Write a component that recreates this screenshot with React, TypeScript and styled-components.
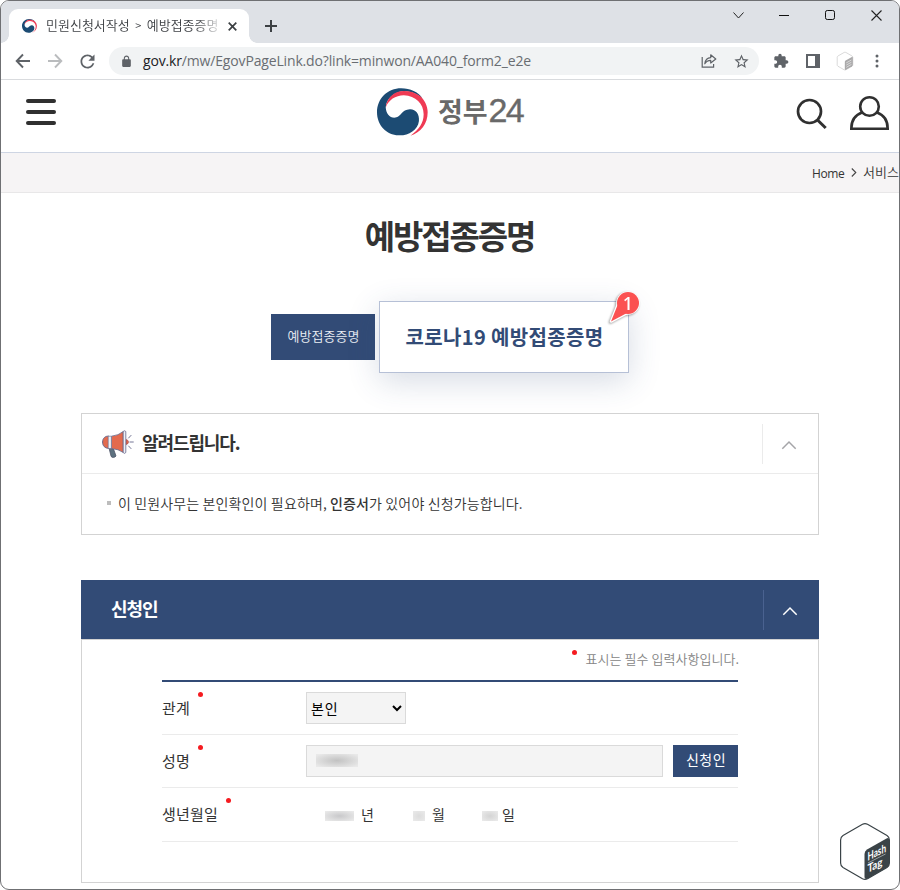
import React from "react";
import styled, { createGlobalStyle } from "styled-components";

const NAVY = "#324b76";

const Global = createGlobalStyle`
  * { box-sizing: border-box; }
  body { margin: 0; background: #fff; }
  body, select, button { font-family: "Noto Sans CJK KR", sans-serif; }
  svg { display: block; flex: none; overflow: visible; }
`;

const Window = styled.div`
  position: relative;
  width: 900px;
  height: 890px;
  border: 1px solid #6f7073;
  border-radius: 9px;
  overflow: hidden;
  background: #fff;
  color: #333;
`;

/* ---------- browser chrome ---------- */

const TabStrip = styled.div`
  display: flex;
  height: 42px;
  padding-left: 8px;
  background: #dee1e6;
`;

const Tab = styled.div`
  position: relative;
  display: flex;
  align-items: center;
  width: 240px;
  height: 34px;
  margin-top: 8px;
  padding-left: 13px;
  border-radius: 9px 9px 0 0;
  background: #fff;
  &::before, &::after {
    content: "";
    position: absolute;
    bottom: 0;
    width: 8px;
    height: 8px;
  }
  &::before { left: -8px; background: radial-gradient(circle at 0 0, transparent 7.5px, #fff 8px); }
  &::after { right: -8px; background: radial-gradient(circle at 100% 0, transparent 7.5px, #fff 8px); }
`;

const TabTitle = styled.div`
  width: 173px;
  margin: 0 9px 2px 9px;
  overflow: hidden;
  white-space: nowrap;
  font-size: 13px;
  font-weight: 350;
  line-height: 20px;
  color: #3c3f43;
  mask-image: linear-gradient(90deg, #000 150px, transparent 178px);
`;

const Gt = styled.span`
  display: inline-block;
  width: 17px;
  text-align: center;
  font-size: 11px;
`;

const NewTab = styled.div`
  display: flex;
  align-items: center;
  margin: 8px 0 0 16px;
`;

const Controls = styled.div`
  display: flex;
  height: 28px;
  margin-left: auto;
`;

const Control = styled.div<{ $w: number }>`
  display: flex;
  align-items: center;
  justify-content: center;
  width: ${(p) => p.$w}px;
`;

const Toolbar = styled.div`
  display: flex;
  align-items: center;
  height: 37px;
  padding-left: 6px;
  border-bottom: 1px solid #d9dbde;
`;

const Slot = styled.div<{ $w?: number }>`
  display: flex;
  justify-content: center;
  flex: none;
  width: ${(p) => p.$w ?? 32}px;
`;

const Omnibox = styled.div`
  display: flex;
  align-items: center;
  width: 650px;
  height: 28px;
  margin: 0 6px;
  padding-right: 2px;
  border-radius: 14px;
  background: #f1f3f4;
`;

const Url = styled.div`
  flex: 1;
  font: 14px/20px "Open Sans", "Noto Sans", sans-serif;
  letter-spacing: -0.16px;
  white-space: nowrap;
  color: #696d72;
`;

const Host = styled.span`
  color: #202124;
`;

/* ---------- page header ---------- */

const SiteHeader = styled.header`
  display: grid;
  grid-template-columns: 1fr auto 1fr;
  height: 73px;
  border-bottom: 1px solid #ced5e3;
`;

const Burger = styled.button`
  display: flex;
  flex-direction: column;
  justify-content: space-between;
  width: 30px;
  height: 26px;
  margin: 19px 0 0 25px;
  padding: 0;
  border: 0;
  background: none;
`;

const Bar = styled.span`
  height: 4px;
  border-radius: 2px;
  background: #303030;
`;

const Brand = styled.div`
  display: flex;
  padding-top: 8px;
`;

const BrandName = styled.div`
  display: flex;
  align-items: baseline;
  height: 48px;
  margin-left: 10px;
  color: #696969;
  font-size: 27px;
  font-weight: 700;
  line-height: 45px;
  letter-spacing: -0.1px;
`;

const BrandNumber = styled.span`
  margin-left: 1px;
  font-family: "Liberation Sans", sans-serif;
  font-size: 34px;
  font-weight: 400;
  letter-spacing: -1.6px;
  -webkit-text-stroke: 0.4px #696969;
`;

const HeaderTools = styled.div`
  display: flex;
  justify-content: flex-end;
  gap: 22px;
  padding: 16px 10px 0 0;
`;

const Crumbs = styled.nav`
  display: flex;
  align-items: center;
  height: 40px;
  padding-left: 811px;
  border-bottom: 1px solid #e8e7e8;
  background: #f6f4f5;
  white-space: nowrap;
  font-size: 13px;
  font-weight: 350;
  line-height: 20px;
`;

const HomeLabel = styled.span`
  width: 39px;
  padding-top: 2px;
  font-family: "Open Sans", sans-serif;
  font-size: 12px;
  font-weight: 400;
  letter-spacing: -0.4px;
`;

const CrumbLabel = styled.span`
  margin: 0 0 1px 6px;
`;

/* ---------- content ---------- */

const Title = styled.h1`
  height: 48px;
  margin: 18px 0 42px;
  padding-right: 1px;
  text-align: center;
  font-size: 33px;
  font-weight: 700;
  line-height: 48px;
  letter-spacing: -2.1px;
`;

const Choices = styled.div`
  display: flex;
  justify-content: center;
  align-items: center;
  gap: 4px;
  height: 72px;
`;

const Choice = styled.button`
  width: 104px;
  height: 46px;
  padding: 0 0 3px 1px;
  border: 0;
  background: ${NAVY};
  color: #eceff4;
  font-size: 13px;
  font-weight: 350;
`;

const MainChoice = styled.button`
  position: relative;
  width: 250px;
  height: 72px;
  padding: 0 0 2px 1px;
  border: 1px solid #b6c0d6;
  background: #fff;
  box-shadow: 0 8px 32px rgba(50, 75, 118, 0.2);
  color: ${NAVY};
  font-size: 20px;
  font-weight: 700;
  letter-spacing: 0.35px;
  white-space: nowrap;
`;

const Marker = styled.svg`
  position: absolute;
  left: 226px;
  top: -14px;
  filter: drop-shadow(-1px 1px 1px rgba(0, 0, 0, 0.4));
`;

const Notice = styled.section`
  width: 738px;
  height: 122px;
  margin: 40px 0 45px 80px;
  border: 1px solid #d3d3d3;
`;

const PanelHead = styled.div<{ $dark?: boolean }>`
  display: flex;
  align-items: center;
  height: ${(p) => (p.$dark ? 59 : 60)}px;
  padding-left: ${(p) => (p.$dark ? 30 : 20)}px;
  border-bottom: ${(p) => (p.$dark ? "0" : "1px solid #ebebeb")};
  background: ${(p) => (p.$dark ? NAVY : "#fff")};
  color: ${(p) => (p.$dark ? "#fff" : "#333")};
`;

const Heading = styled.h2<{ $gap?: number }>`
  flex: 1;
  margin: 0 0 3px ${(p) => p.$gap ?? 0}px;
  font-size: 18px;
  font-weight: 700;
  line-height: 28px;
  letter-spacing: -1.1px;
`;

const Toggle = styled.div<{ $dark?: boolean }>`
  display: flex;
  align-items: center;
  width: 56px;
  height: 40px;
  padding: 2px 0 0 18px;
  border-left: 1px solid ${(p) => (p.$dark ? "#4a6290" : "#ebebeb")};
`;

const NoticeLine = styled.div`
  display: flex;
  align-items: center;
  height: 60px;
  padding-left: 25px;
  font-size: 14px;
  font-weight: 350;
  letter-spacing: 0.13px;
  white-space: pre;
`;

const NoticeText = styled.span`
  margin-bottom: 3px;
`;

const Bullet = styled.span`
  width: 4px;
  height: 4px;
  margin: 0 7px 2px 0;
  background: #bdbdbd;
`;

const Strong = styled.b`
  font-weight: 500;
`;

const Applicant = styled.section`
  width: 738px;
  margin-left: 80px;
`;

const FormBody = styled.div`
  height: 244px;
  padding: 0 80px;
  border: 1px solid #d3d3d3;
`;

const RequiredNote = styled.div`
  display: flex;
  justify-content: flex-end;
  height: 40px;
  margin-right: -1px;
  font-size: 13px;
  font-weight: 350;
  line-height: 38px;
  letter-spacing: 0.04px;
  color: #858585;
  white-space: nowrap;
`;

const Dot = styled.i<{ $top: number; $gap: number }>`
  width: 5px;
  height: 5px;
  margin: ${(p) => p.$top}px ${(p) => p.$gap}px 0 0;
  border-radius: 50%;
  background: #f51b20;
`;

const Fields = styled.div`
  border-top: 2px solid ${NAVY};
`;

const Field = styled.div<{ $h: number }>`
  display: flex;
  align-items: center;
  height: ${(p) => p.$h}px;
  border-bottom: 1px solid #ebebeb;
`;

const Label = styled.div`
  display: flex;
  align-self: stretch;
  width: 144px;
  font-size: 15px;
  line-height: 51px;
  letter-spacing: 0.2px;
  gap: 8px;
`;

const Select = styled.select`
  width: 100px;
  height: 32px;
  padding: 0 0 1px;
  border: 1px solid #dadada;
  border-radius: 0;
  background: #f4f4f4;
  color: #000;
  font-size: 14px;
  letter-spacing: 0.8px;
`;

const NameBox = styled.div`
  width: 357px;
  height: 32px;
  margin-right: 10px;
  padding: 8px 9px;
  border: 1px solid #dadada;
  background: #f4f4f4;
`;

const Mask = styled.div<{ $w: number; $h: number; $tone: string }>`
  width: ${(p) => p.$w}px;
  height: ${(p) => p.$h}px;
  margin-top: 3px;
  background: radial-gradient(ellipse at center, ${(p) => p.$tone}, #e9e9e9 90%);
`;

const NameMask = styled(Mask)`
  margin-top: 0;
`;

const Submit = styled.button`
  width: 65px;
  height: 32px;
  padding: 0 0 4px 1px;
  border: 0;
  background: ${NAVY};
  color: #fff;
  font-size: 14px;
  letter-spacing: 0.4px;
`;

const DatePart = styled.div<{ $w: number; $gap?: number }>`
  display: flex;
  align-items: center;
  justify-content: flex-end;
  gap: ${(p) => p.$gap ?? 7}px;
  width: ${(p) => p.$w}px;
  font-size: 14px;
`;

const Unit = styled.span`
  margin-bottom: 2px;
`;

const Watermark = styled.div`
  position: absolute;
  left: 839px;
  top: 822px;
`;

/* ---------- drawings ---------- */

const Material = ({ d, size = 20, color = "#5f6368" }: { d: string; size?: number; color?: string }) => (
  <svg width={size} height={size} viewBox="0 0 24 24" fill={color}><path d={d} /></svg>
);

const LOCK = "M18 8h-1V6c0-2.76-2.24-5-5-5S7 3.24 7 6v2H6c-1.1 0-2 .9-2 2v10c0 1.1.9 2 2 2h12c1.1 0 2-.9 2-2V10c0-1.1-.9-2-2-2zM9 6c0-1.66 1.34-3 3-3s3 1.34 3 3v2H9V6z";
const REFRESH = "M17.65 6.35C16.2 4.9 14.21 4 12 4c-4.42 0-7.99 3.58-7.99 8s3.57 8 7.99 8c3.73 0 6.84-2.55 7.73-6h-2.08c-.82 2.33-3.04 4-5.65 4-3.31 0-6-2.69-6-6s2.69-6 6-6c1.66 0 3.14.69 4.22 1.78L13 11h7V4l-2.35 2.35z";
const STAR = "M22 9.24l-7.19-.62L12 2 9.19 8.63 2 9.24l5.46 4.73L5.82 21 12 17.27 18.18 21l-1.63-7.03L22 9.24zM12 15.4l-3.76 2.27 1-4.28-3.32-2.88 4.38-.38L12 6.1l1.71 4.04 4.38.38-3.32 2.88 1 4.28L12 15.4z";
const PUZZLE = "M20.5 11H19V7c0-1.1-.9-2-2-2h-4V3.5C13 2.12 11.88 1 10.5 1S8 2.12 8 3.5V5H4c-1.1 0-1.99.9-1.99 2v3.8H3.5c1.49 0 2.7 1.21 2.7 2.7s-1.21 2.7-2.7 2.7H2V20c0 1.1.9 2 2 2h3.8v-1.5c0-1.49 1.21-2.7 2.7-2.7 1.49 0 2.7 1.21 2.7 2.7V22H17c1.1 0 2-.9 2-2v-4h1.5c1.38 0 2.5-1.12 2.5-2.5S21.88 11 20.5 11z";

const Arrow = ({ color, flip }: { color: string; flip?: boolean }) => (
  <svg width="16" height="16" viewBox="0 0 16 16" fill="none" stroke={color} strokeWidth="1.9">
    <path d={flip ? "M1 8h13M8 1.5 14.3 8 8 14.5" : "M15 8H2M8 1.5 1.7 8 8 14.5"} />
  </svg>
);

const Taegeuk = ({ width, height }: { width: number; height: number }) => (
  <svg width={width} height={height} viewBox="80 38 152 146" preserveAspectRatio="none">
    <path fill="#1c4b73" d="M148 182C110 184 80 152 80 112C80 70 112 39 152 39C180 39 202 50 216 70C196 52 175 46 155 48C128 52 108 72 106 97C107 115 118 130 135 128C152 126 153 104 178 103C195 102 207 118 205 138C202 165 175 182 148 182Z" />
    <path fill="#ef3a54" d="M106 97C108 70 130 47 160 47C180 47 195 53 208 62C222 74 231 92 231 112C231 148 210 173 180 183C205 165 219 145 219 118C219 85 195 62 160 60C135 60 114 75 106 97Z" />
  </svg>
);

const Share = () => (
  <svg width="16" height="16" viewBox="0 0 16 16" fill="none" stroke="#5f6368" strokeWidth="1.2">
    <path d="M1.2 4v10.2h11.4v-3.3" />
    <path d="M3.8 10.8C4.3 7 6.5 4.8 9.7 4.7V1.8L14.8 6 9.7 10V7.3C7 7.3 5.2 8.3 3.8 10.8Z" strokeLinejoin="round" />
  </svg>
);

const Cube = ({ size, pale }: { size: number; pale?: boolean }) => {
  const ink = pale ? "#aaa9aa" : "#3a4347";
  return (
    <svg width={size} height={size * 1.14} viewBox="0 0 50 57">
      <path fill="#fff" stroke={pale ? "#c4c4c4" : ink} strokeWidth={pale ? 2 : 1.2} strokeLinejoin="round"
        d="M22.5 1.3Q25 0 27.5 1.3L47 12.5Q49.4 14 49.4 17V40Q49.4 43 47 44.5L27.5 55.7Q25 57 22.5 55.7L3 44.5Q.6 43 .6 40V17Q.6 14 3 12.5Z" />
      <path fill={ink} d="M24.5 31Q24.5 28 27 26.5L46.5 15.5Q49.4 14 49.4 18V40Q49.4 43 47 44.5L28 55.5Q24.5 57 24.5 54Z" />
      {pale ? (
        <path d="M29 34l16-9M29 41l16-9M29 48l16-9" stroke="#f2f2f2" strokeWidth="2" />
      ) : (
        <g transform="translate(27.5 38) skewY(-27)" fill="#fff" fontFamily="Lato, sans-serif" fontWeight="700">
          <text x="0" y="0" fontSize="11.5" textLength="18.5" lengthAdjust="spacingAndGlyphs">Hash</text>
          <path d="M.5 2.2h17.5" stroke="#aeb4b6" strokeWidth=".7" />
          <text x="0" y="12" fontSize="11.5" textLength="15" lengthAdjust="spacingAndGlyphs">Tag</text>
        </g>
      )}
    </svg>
  );
};

const Megaphone = () => (
  <svg width="32" height="28" viewBox="0 0 32 28" strokeLinejoin="round">
    <path fill="#5d7280" stroke="#4e5468" strokeWidth=".8" d="M7 18l4.5 1 2.500 7c-.8 1.600-4 2-4.900.4Z" />
    <path fill="#e36a4e" stroke="#65678a" strokeWidth="1" d="M7 6.2C3 5.8.7 8.3.6 12s2.3 6.5 6.4 6.3Z" />
    <path fill="#e36a4e" stroke="#65678a" strokeWidth=".8" d="M9.500 6.2Q16.500 5.500 21.300 1.500v21Q16.500 19 9.500 18.500Z" />
    <path fill="#eef0f6" stroke="#65678a" strokeWidth=".6" d="M6.200 6.200h3.200v12.300h-3.200Z" />
    <path fill="#e36a4e" stroke="#aa4b4b" strokeWidth=".7" d="M24 9.500q2.500.5 2.500 2.500T24 14.500Z" />
    <path fill="#eef0f6" stroke="#65678a" strokeWidth=".8" d="M21.200 1.500q1.400-1.500 2.600 0v21q-1.200 1.800-2.600 0Z" />
    <path fill="none" stroke="#65678a" strokeWidth=".9" d="M27.500 12h4.200M26.300 8.300l3-3.200M26.300 15.700l3 3.200" />
  </svg>
);

const Chevron = ({ color }: { color: string }) => (
  <svg width="16" height="10" viewBox="0 0 16 10" fill="none" stroke={color} strokeWidth="1.5">
    <path d="M1.3 8.8 8 2l6.7 6.800" />
  </svg>
);

export default function App() {
  return (
    <Window>
      <Global />
      <TabStrip>
        <Tab>
          <Taegeuk width={15} height={14} />
          <TabTitle>민원신청서작성<Gt>&gt;</Gt>예방접종증명</TabTitle>
          <svg width="9" height="9" viewBox="0 0 9 9" stroke="#3c4043" strokeWidth="1.7"><path d="M.7.7l7.6 7.6M8.3.7L.7 8.3" /></svg>
        </Tab>
        <NewTab>
          <svg width="12" height="12" viewBox="0 0 12 12" stroke="#3c4043" strokeWidth="2"><path d="M6 0v12M0 6h12" /></svg>
        </NewTab>
        <Controls>
          <Control $w={46}><svg width="11" height="7" viewBox="0 0 11 7" fill="none" stroke="#222"><path d="M.5.5l5 5.500 5-5.500" /></svg></Control>
          <Control $w={46}><svg width="10" height="1"><rect width="10" height="1" fill="#111" /></svg></Control>
          <Control $w={46}><svg width="10" height="10" viewBox="0 0 10 10" fill="none" stroke="#111"><rect x=".5" y=".5" width="9" height="9" rx="1.8" /></svg></Control>
          <Control $w={46}><svg width="11" height="11" viewBox="0 0 11 11" stroke="#222" strokeWidth="1.1"><path d="M.5.5l10 10M10.5.5l-10 10" /></svg></Control>
        </Controls>
      </TabStrip>
      <Toolbar>
        <Slot><Arrow color="#5f6368" /></Slot>
        <Slot><Arrow color="#babcbe" flip /></Slot>
        <Slot><Material d={REFRESH} size={21} /></Slot>
        <Omnibox>
          <Slot $w={34}><Material d={LOCK} size={13} /></Slot>
          <Url><Host>gov.kr</Host>/mw/EgovPageLink.do?link=minwon/AA040_form2_e2e</Url>
          <Slot><Share /></Slot>
          <Slot><Material d={STAR} size={17} /></Slot>
        </Omnibox>
        <Slot><Material d={PUZZLE} size={16} /></Slot>
        <Slot><svg width="14" height="14" viewBox="0 0 14 14"><path fill="#5f6368" fillRule="evenodd" d="M0 0h14v14H0zM2 2v10h7V2z" /></svg></Slot>
        <Slot><Cube size={16} pale /></Slot>
        <Slot><svg width="4" height="14" viewBox="0 0 4 14" fill="#5f6368"><circle cx="2" cy="2" r="1.5" /><circle cx="2" cy="7" r="1.5" /><circle cx="2" cy="12" r="1.5" /></svg></Slot>
      </Toolbar>

      <SiteHeader>
        <Burger aria-label="메뉴"><Bar /><Bar /><Bar /></Burger>
        <Brand>
          <Taegeuk width={51} height={48} />
          <BrandName>정부<BrandNumber>24</BrandNumber></BrandName>
        </Brand>
        <HeaderTools>
          <svg width="32" height="34" viewBox="0 0 32 34" fill="none" stroke="#303030">
            <circle cx="13.5" cy="15.5" r="11.5" strokeWidth="2.7" /><path d="M21.5 24l8.2 8" strokeWidth="3" />
          </svg>
          <svg width="39" height="34" viewBox="0 0 39 34" fill="none" stroke="#303030" strokeWidth="2.6">
            <circle cx="19.5" cy="10.5" r="9.3" /><path d="M12 16.5C5 19 1.3 25 1.3 32.7h36.4C37.7 25 34 19 27 16.5" />
          </svg>
        </HeaderTools>
      </SiteHeader>
      <Crumbs>
        <HomeLabel>Home</HomeLabel>
        <svg width="6" height="9" viewBox="0 0 6 9" fill="none" stroke="#444" strokeWidth="1.1"><path d="M.8.5l4 4-4 4" /></svg>
        <CrumbLabel>서비스</CrumbLabel>
      </Crumbs>

      <Title>예방접종증명</Title>
      <Choices>
        <Choice>예방접종증명</Choice>
        <MainChoice>
          코로나19 예방접종증명
          <Marker width="36" height="38" viewBox="0 0 36 38">
            <circle cx="22" cy="15" r="11.8" fill="#fff" />
            <path d="M5 33.5 12 16 21 25Z" fill="#fb5151" stroke="#fff" strokeWidth="2.6" strokeLinejoin="round" />
            <path d="M5 33.5 12 16 21 25Z" fill="#fb5151" />
            <circle cx="22" cy="15" r="11" fill="#fb5151" />
            <text x="22" y="21.5" textAnchor="middle" fill="#fff" fontFamily="Noto Sans, sans-serif" fontSize="18" fontWeight="500" letterSpacing="0">1</text>
          </Marker>
        </MainChoice>
      </Choices>

      <Notice>
        <PanelHead>
          <Megaphone />
          <Heading $gap={8}>알려드립니다.</Heading>
          <Toggle><Chevron color="#a5a5a8" /></Toggle>
        </PanelHead>
        <NoticeLine><Bullet /><NoticeText>이 민원사무는 본인확인이 필요하며, <Strong>인증서</Strong>가 있어야 신청가능합니다.</NoticeText></NoticeLine>
      </Notice>

      <Applicant>
        <PanelHead $dark>
          <Heading>신청인</Heading>
          <Toggle $dark><Chevron color="#fff" /></Toggle>
        </PanelHead>
        <FormBody>
          <RequiredNote><Dot $top={10} $gap={9} />표시는 필수 입력사항입니다.</RequiredNote>
          <Fields>
            <Field $h={53}>
              <Label>관계<Dot $top={10} $gap={0} /></Label>
              <Select defaultValue="self"><option value="self">본인</option></Select>
            </Field>
            <Field $h={53}>
              <Label>성명<Dot $top={10} $gap={0} /></Label>
              <NameBox><NameMask $w={42} $h={13} $tone="#c2c2c2" /></NameBox>
              <Submit>신청인</Submit>
            </Field>
            <Field $h={54}>
              <Label>생년월일<Dot $top={10} $gap={0} /></Label>
              <DatePart $w={68}><Mask $w={29} $h={10} $tone="#c8c8ca" /><Unit>년</Unit></DatePart>
              <DatePart $w={71}><Mask $w={12} $h={10} $tone="#dcdcdc" /><Unit>월</Unit></DatePart>
              <DatePart $w={70} $gap={4}><Mask $w={16} $h={10} $tone="#d4d4d4" /><Unit>일</Unit></DatePart>
            </Field>
          </Fields>
        </FormBody>
      </Applicant>

      <Watermark><Cube size={50} /></Watermark>
    </Window>
  );
}
